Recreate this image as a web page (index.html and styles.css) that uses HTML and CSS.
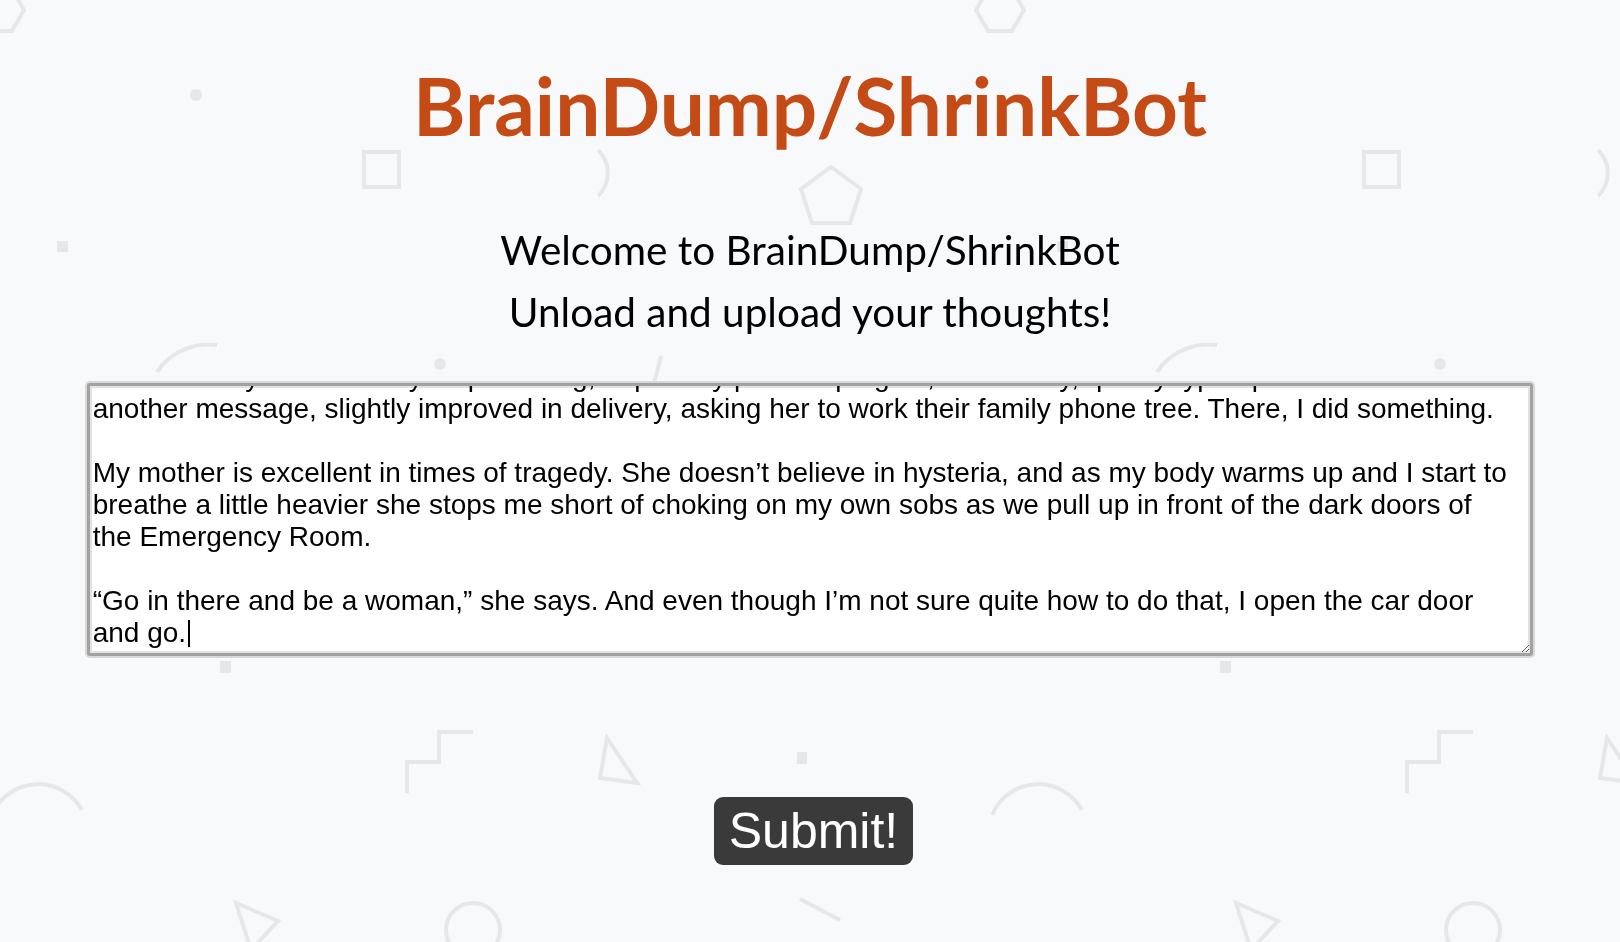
FILE: index.html
```html
<!DOCTYPE html>
<html lang="en">
<head>
<meta charset="utf-8">
<title>BrainDump/ShrinkBot</title>
<link rel="stylesheet" href="styles.css">
</head>
<body>
<svg class="bg" xmlns="http://www.w3.org/2000/svg" aria-hidden="true">
  <defs>
    <pattern id="shapes" width="1000" height="942" patternUnits="userSpaceOnUse">
      <g fill="none" stroke="#e6e7e9" stroke-width="4">
        <polygon points="1024,10 1012,31 988,31 976,10 988,-11 1012,-11"/>
        <polygon points="24,10 12,31 -12,31 -24,10 -12,-11 12,-11"/>
        <rect x="364" y="152" width="35" height="35"/>
        <path d="M598,150 A32,32 0 0 1 598,196"/>
        <polygon points="831,167 861,189 850,223 812,223 801,189"/>
        <path d="M157,372 A62,62 0 0 1 217,345"/>
        <path d="M661,356 L654,384"/>
        <path d="M407,793 V762 H439 V732 H473"/>
        <polygon points="607,738 600,778 637,783"/>
        <path d="M-8,815 A50,50 0 0 1 82,810"/>
        <path d="M992,815 A50,50 0 0 1 1082,810"/>
        <polygon points="236,903 278,921 251,950"/>
        <circle cx="473" cy="930" r="27"/>
        <path d="M800,899 L840,920"/>
      </g>
      <g fill="#e6e7e9">
        <circle cx="196" cy="95" r="6"/>
        <circle cx="440" cy="364" r="6"/>
        <rect x="57" y="241" width="11" height="11"/>
        <rect x="220" y="661" width="11" height="12"/>
        <rect x="797" y="752" width="10" height="12"/>
      </g>
    </pattern>
  </defs>
  <rect width="100%" height="100%" fill="url(#shapes)"/>
</svg>
<main class="page">
  <h1 class="title">BrainDump/ShrinkBot</h1>
  <h2 class="subtitle">Welcome to BrainDump/ShrinkBot</h2>
  <h2 class="subtitle">Unload and upload your thoughts!</h2>
  <form class="dump">
    <div class="field">
      <textarea class="entry" spellcheck="false">
The phone rings twice before my sister picks up, and I can’t find the words, so I hang up.
I sit in the passenger seat of my mother’s car, watching the streetlights blur past the window,
and when my hands finally stop shaking, I open my phone up again, and slowly, quietly type up
another message, slightly improved in delivery, asking her to work their family phone tree. There, I did something.

My mother is excellent in times of tragedy. She doesn’t believe in hysteria, and as my body warms up and I start to
breathe a little heavier she stops me short of choking on my own sobs as we pull up in front of the dark doors of
the Emergency Room.

“Go in there and be a woman,” she says. And even though I’m not sure quite how to do that, I open the car door
and go.</textarea>
      <span class="caret" aria-hidden="true"></span>
    </div>
    <button class="submit" type="button">Submit!</button>
  </form>
</main>
<script src="script.js"></script>
</body>
</html>
```

FILE: styles.css
```css
html {
  background: #f8f9fa;
}

body {
  margin: 0;
  font-family: "Lato", "Open Sans", sans-serif;
  color: #000;
}

.bg {
  position: fixed;
  top: 0;
  left: 0;
  width: 100%;
  height: 100%;
  z-index: 0;
}

.page {
  position: relative;
  z-index: 1;
  display: flex;
  flex-direction: column;
  align-items: center;
}

.title {
  margin: 57px 0 0;
  font-size: 80px;
  line-height: 96px;
  font-weight: 700;
  color: #c44a16;
}

.subtitle {
  margin: 0;
  font-size: 40.5px;
  line-height: 62px;
  font-weight: 400;
}

.title + .subtitle {
  margin-top: 66px;
}

.dump {
  width: 100%;
  display: flex;
  flex-direction: column;
  align-items: center;
}

.field {
  position: relative;
  width: 89.3%;
  margin-top: 40px;
  display: flex;
}

.entry {
  box-sizing: border-box;
  width: 100%;
  height: 273px;
  margin: 0;
  padding: 3px 3px 4px;
  border: 3px solid #a2a2a2;
  border-radius: 3px;
  box-shadow: 0 0 0 2px #d8d8d8, inset 0 0 0 2px #e2e2e2;
  background: #fff;
  color: #000;
  font-family: "Liberation Sans", Arial, sans-serif;
  font-size: 28px;
  line-height: 32px;
  resize: both;
  outline: none;
  caret-color: transparent;
  scrollbar-width: none;
}

.entry::-webkit-scrollbar {
  display: none;
}

.caret {
  position: absolute;
  left: 101px;
  top: 237px;
  width: 2px;
  height: 27px;
  background: #000;
}

.submit {
  margin-top: 141px;
  margin-left: 7px;
  padding: 5px 15px;
  border: none;
  border-radius: 9px;
  background: #3a3a3a;
  color: #fff;
  font-family: "Liberation Sans", Arial, sans-serif;
  font-size: 50px;
  line-height: 58px;
  cursor: pointer;
}
```

FILE: script.js
```js
const entry = document.querySelector('.entry');
entry.focus();
entry.setSelectionRange(entry.value.length, entry.value.length);
entry.scrollTop = entry.scrollHeight;
```
